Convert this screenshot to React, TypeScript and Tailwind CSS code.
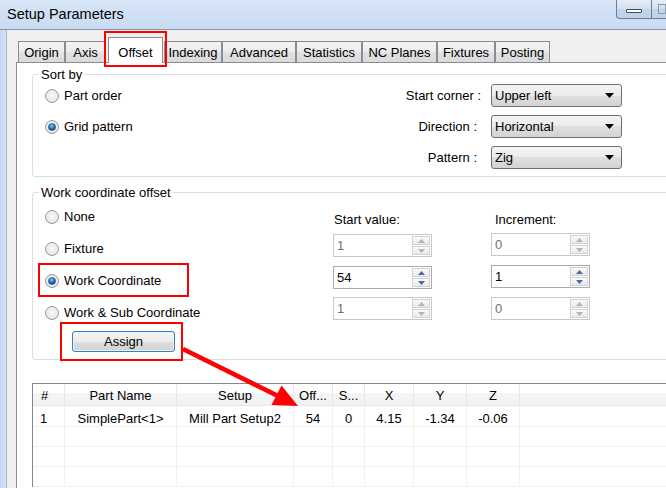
import React from "react";

const tabs = [
  { label: "Origin", w: "w-[47px]" },
  { label: "Axis", w: "w-[41px]" },
  { label: "Offset", w: "w-[55px]", active: true },
  { label: "Indexing", w: "w-[58px]" },
  { label: "Advanced", w: "w-[74px]" },
  { label: "Statistics", w: "w-[66px]" },
  { label: "NC Planes", w: "w-[75px]" },
  { label: "Fixtures", w: "w-[58px]" },
  { label: "Posting", w: "w-[55px]" },
];

const cols = [
  { h: "#", align: "text-left pl-[8px]" },
  { h: "Part Name" },
  { h: "Setup" },
  { h: "Off..." },
  { h: "S..." },
  { h: "X" },
  { h: "Y" },
  { h: "Z" },
  { h: "" },
];

const row1 = ["1", "SimplePart<1>", "Mill Part Setup2", "54", "0", "4.15", "-1.34", "-0.06", ""];

function Radio({ checked }: { checked?: boolean }) {
  return (
    <svg width="14" height="14" viewBox="0 0 14 14" className="shrink-0">
      <defs>
        <radialGradient id="rOff" cx="50%" cy="45%" r="60%">
          <stop offset="0" stopColor="#fbfbfb" />
          <stop offset="0.7" stopColor="#e6e6e6" />
          <stop offset="1" stopColor="#cfcfcf" />
        </radialGradient>
        <radialGradient id="rOn" cx="45%" cy="35%" r="70%">
          <stop offset="0" stopColor="#8fd0f7" />
          <stop offset="0.5" stopColor="#1c75c0" />
          <stop offset="1" stopColor="#0b3f75" />
        </radialGradient>
      </defs>
      <circle cx="7" cy="7" r="6.4" fill="url(#rOff)" stroke="#8d8d8d" strokeWidth="1" />
      <circle cx="7" cy="7" r="5.2" fill="none" stroke="#f4f4f4" strokeWidth="0.8" />
      {checked && <circle cx="7" cy="7" r="3.6" fill="url(#rOn)" stroke="#1b4d7e" strokeWidth="0.5" />}
    </svg>
  );
}

function RadioRow({ label, checked }: { label: string; checked?: boolean }) {
  return (
    <div className="flex h-[32px] items-center gap-[5px] pt-[1px]">
      <Radio checked={checked} />
      <span>{label}</span>
    </div>
  );
}

function Select({ value }: { value: string }) {
  return (
    <div className="flex h-[23px] w-[131px] items-center justify-between rounded-[3px] border border-[#707070] bg-[linear-gradient(#f4f4f4,#ececec_50%,#e0e0e0_50%,#d3d3d3)] pl-[3px] pr-[7px]">
      <span>{value}</span>
      <svg width="9" height="5" viewBox="0 0 9 5">
        <path d="M0 0h9L4.5 5z" fill="#000" />
      </svg>
    </div>
  );
}

function SpinBtn({ up, enabled }: { up?: boolean; enabled?: boolean }) {
  return (
    <div className="flex flex-1 items-center justify-center border border-[#cfd1d3] bg-[linear-gradient(#fafafa,#e9e9e9)]">
      <svg width="7" height="4" viewBox="0 0 7 4">
        <path d={up ? "M0 4h7L3.5 0z" : "M0 0h7L3.5 4z"} fill={enabled ? "#4a67a5" : "#b4b4b4"} />
      </svg>
    </div>
  );
}

function Spin({ value, enabled, className = "" }: { value: string; enabled?: boolean; className?: string }) {
  return (
    <div
      className={`flex h-[23px] w-[99px] border bg-white ${enabled ? "border-[#a9acb2]" : "border-[#c6c8cb]"} ${className}`}
    >
      <div className={`flex-1 pl-[3px] leading-[21px] ${enabled ? "text-black" : "text-[#707070]"}`}>{value}</div>
      <div className="flex w-[20px] flex-col gap-px p-[1px]">
        <SpinBtn up enabled={enabled} />
        <SpinBtn enabled={enabled} />
      </div>
    </div>
  );
}

export default function App() {
  return (
    <div className="relative h-[488px] w-[666px] overflow-hidden bg-[#f0f0f0] font-['Liberation_Sans',Arial,sans-serif] text-[13px] text-black">
      {/* title bar */}
      <div className="flex h-[30px] items-start justify-between border-b border-[#8796aa] bg-[linear-gradient(#d7e6f7,#c8dbf1)]">
        <div className="pl-[7px] pt-[5px] text-[14.5px] leading-[18px]">Setup Parameters</div>
        <div className="flex">
          <div className="flex h-[19px] w-[35px] items-center justify-center rounded-bl-[4px] border-b border-l border-[#6c7d94] bg-[linear-gradient(#e6eef8,#d2dff0_50%,#c3d4ea_50%,#bfd2ea)]">
            <div className="mt-[3px] h-[4px] w-[16px] rounded-[1px] border border-[#3c4a5d] bg-white" />
          </div>
          <div className="flex h-[19px] w-[15px] items-start border-b border-l border-[#6c7d94] bg-[linear-gradient(#e6eef8,#d2dff0_50%,#c3d4ea_50%,#bfd2ea)] pl-[6px] pt-[4px]">
            <div className="h-[10px] w-[10px] border border-[#8a99ad]" />
          </div>
        </div>
      </div>

      <div className="flex h-[458px]">
        <div className="w-[7px] shrink-0 border-r border-[#a9b8cb] bg-[linear-gradient(to_right,#c2d7ef,#d4e3f5)]" />
        <div className="min-w-0 flex-1 pl-[9px] pt-[7px]">
          {/* tab strip */}
          <div className="flex h-[25px] items-end pl-[2px]">
            {tabs.map((t) =>
              t.active ? (
                <div
                  key={t.label}
                  className={`relative z-10 -mb-px ml-[2px] mr-[1px] flex h-[26px] shrink-0 items-start justify-center border border-b-0 border-[#898c95] bg-white pt-[5px] ${t.w}`}
                >
                  {t.label}
                </div>
              ) : (
                <div
                  key={t.label}
                  className={`flex h-[21px] shrink-0 items-center justify-center border border-b-0 border-[#898c95] bg-[linear-gradient(#f3f3f3,#ececec_50%,#e2e2e2_50%,#dadada)] pt-[1px] ${t.w}`}
                >
                  {t.label}
                </div>
              )
            )}
          </div>

          {/* tab panel */}
          <div className="h-[500px] w-[720px] border-l border-t border-[#898c95] bg-white pl-[15px] pt-[4px]">
            <fieldset className="w-[690px] rounded-[3px] border border-[#d5dfe5]">
              <legend className="ml-[6px] px-[2px] leading-[15px]">Sort by</legend>
              <div className="grid grid-cols-[288px_138px_131px] grid-rows-[23px_23px_23px] gap-x-[10px] gap-y-[8px] pb-[7px] pl-[12px] pt-[2px]">
                <div className="flex items-center gap-[5px] pt-[1px]">
                  <Radio />
                  <span>Part order</span>
                </div>
                <div className="flex items-center justify-end">Start corner :</div>
                <Select value="Upper left" />
                <div className="flex items-center gap-[5px] pt-[1px]">
                  <Radio checked />
                  <span>Grid pattern</span>
                </div>
                <div className="flex items-center justify-end pr-[4px]">Direction :</div>
                <Select value="Horizontal" />
                <div />
                <div className="flex items-center justify-end pr-[4px]">Pattern :</div>
                <Select value="Zig" />
              </div>
            </fieldset>

            <fieldset className="mt-[8px] w-[690px] rounded-[3px] border border-[#d5dfe5]">
              <legend className="ml-[6px] px-[2px] leading-[15px]">Work coordinate offset</legend>
              <div className="flex pb-[7px] pl-[12px]">
                <div className="flex w-[288px] flex-col">
                  <RadioRow label="None" />
                  <RadioRow label="Fixture" />
                  <RadioRow label="Work Coordinate" checked />
                  <RadioRow label="Work & Sub Coordinate" />
                  <button className="ml-[27px] mt-[3px] h-[21px] w-[103px] rounded-[3px] border border-[#3c7fb1] bg-[linear-gradient(#f4f4f4,#ececec_50%,#dedede_50%,#d2d2d2)] shadow-[inset_0_0_0_1px_#e3f4fc]">
                    Assign
                  </button>
                </div>
                <div className="flex w-[99px] flex-col pt-[12px]">
                  <div className="h-[15px] pl-[1px] leading-[15px]">Start value:</div>
                  <Spin value="1" className="mt-[7px]" />
                  <Spin value="54" enabled className="mt-[9px]" />
                  <Spin value="1" className="mt-[8px]" />
                </div>
                <div className="ml-[59px] flex w-[100px] flex-col pt-[12px]">
                  <div className="h-[15px] pl-[4px] leading-[15px]">Increment:</div>
                  <Spin value="0" className="mt-[6px]" />
                  <Spin value="1" enabled className="mt-[9px]" />
                  <Spin value="0" className="mt-[9px]" />
                </div>
              </div>
            </fieldset>

            {/* list view */}
            <div className="mt-[23px] w-[700px] border-l border-t border-[#828790]">
              <div className="grid grid-cols-[32px_112px_117px_39px_32px_49px_53px_53px_1fr]">
                {cols.map((c, i) => (
                  <div
                    key={i}
                    className={`h-[22px] border-b border-r border-[#e5e7ea] bg-[linear-gradient(#ffffff,#ffffff_45%,#f4f5f7_45%,#f0f1f3)] leading-[24px] ${c.align ?? "text-center"}`}
                  >
                    {c.h}
                  </div>
                ))}
                {row1.map((v, i) => (
                  <div
                    key={"r" + i}
                    className={`h-[21px] border-b border-r border-[#f0f0f0] leading-[25px] ${i === 0 ? "pl-[7px] text-left" : "text-center"}`}
                  >
                    {v}
                  </div>
                ))}
                {[0, 1, 2].map((r) =>
                  cols.map((_, i) => (
                    <div key={`e${r}-${i}`} className="h-[20px] border-b border-r border-[#f0f0f0]" />
                  ))
                )}
              </div>
            </div>
          </div>
        </div>
      </div>

      {/* annotations */}
      <div className="pointer-events-none absolute left-[104px] top-[31px] h-[36px] w-[63px] border-2 border-[#f00]" />
      <div className="pointer-events-none absolute left-[38px] top-[263px] h-[34px] w-[151px] border-2 border-[#f00]" />
      <div className="pointer-events-none absolute left-[60px] top-[322px] h-[39px] w-[123px] border-2 border-[#f00]" />
      <svg className="pointer-events-none absolute left-0 top-0" width="666" height="488">
        <line x1="183" y1="349" x2="278" y2="396" stroke="#f00" strokeWidth="4.5" />
        <polygon points="298,406 271.5,405 281.5,385.5" fill="#f00" />
      </svg>
    </div>
  );
}
